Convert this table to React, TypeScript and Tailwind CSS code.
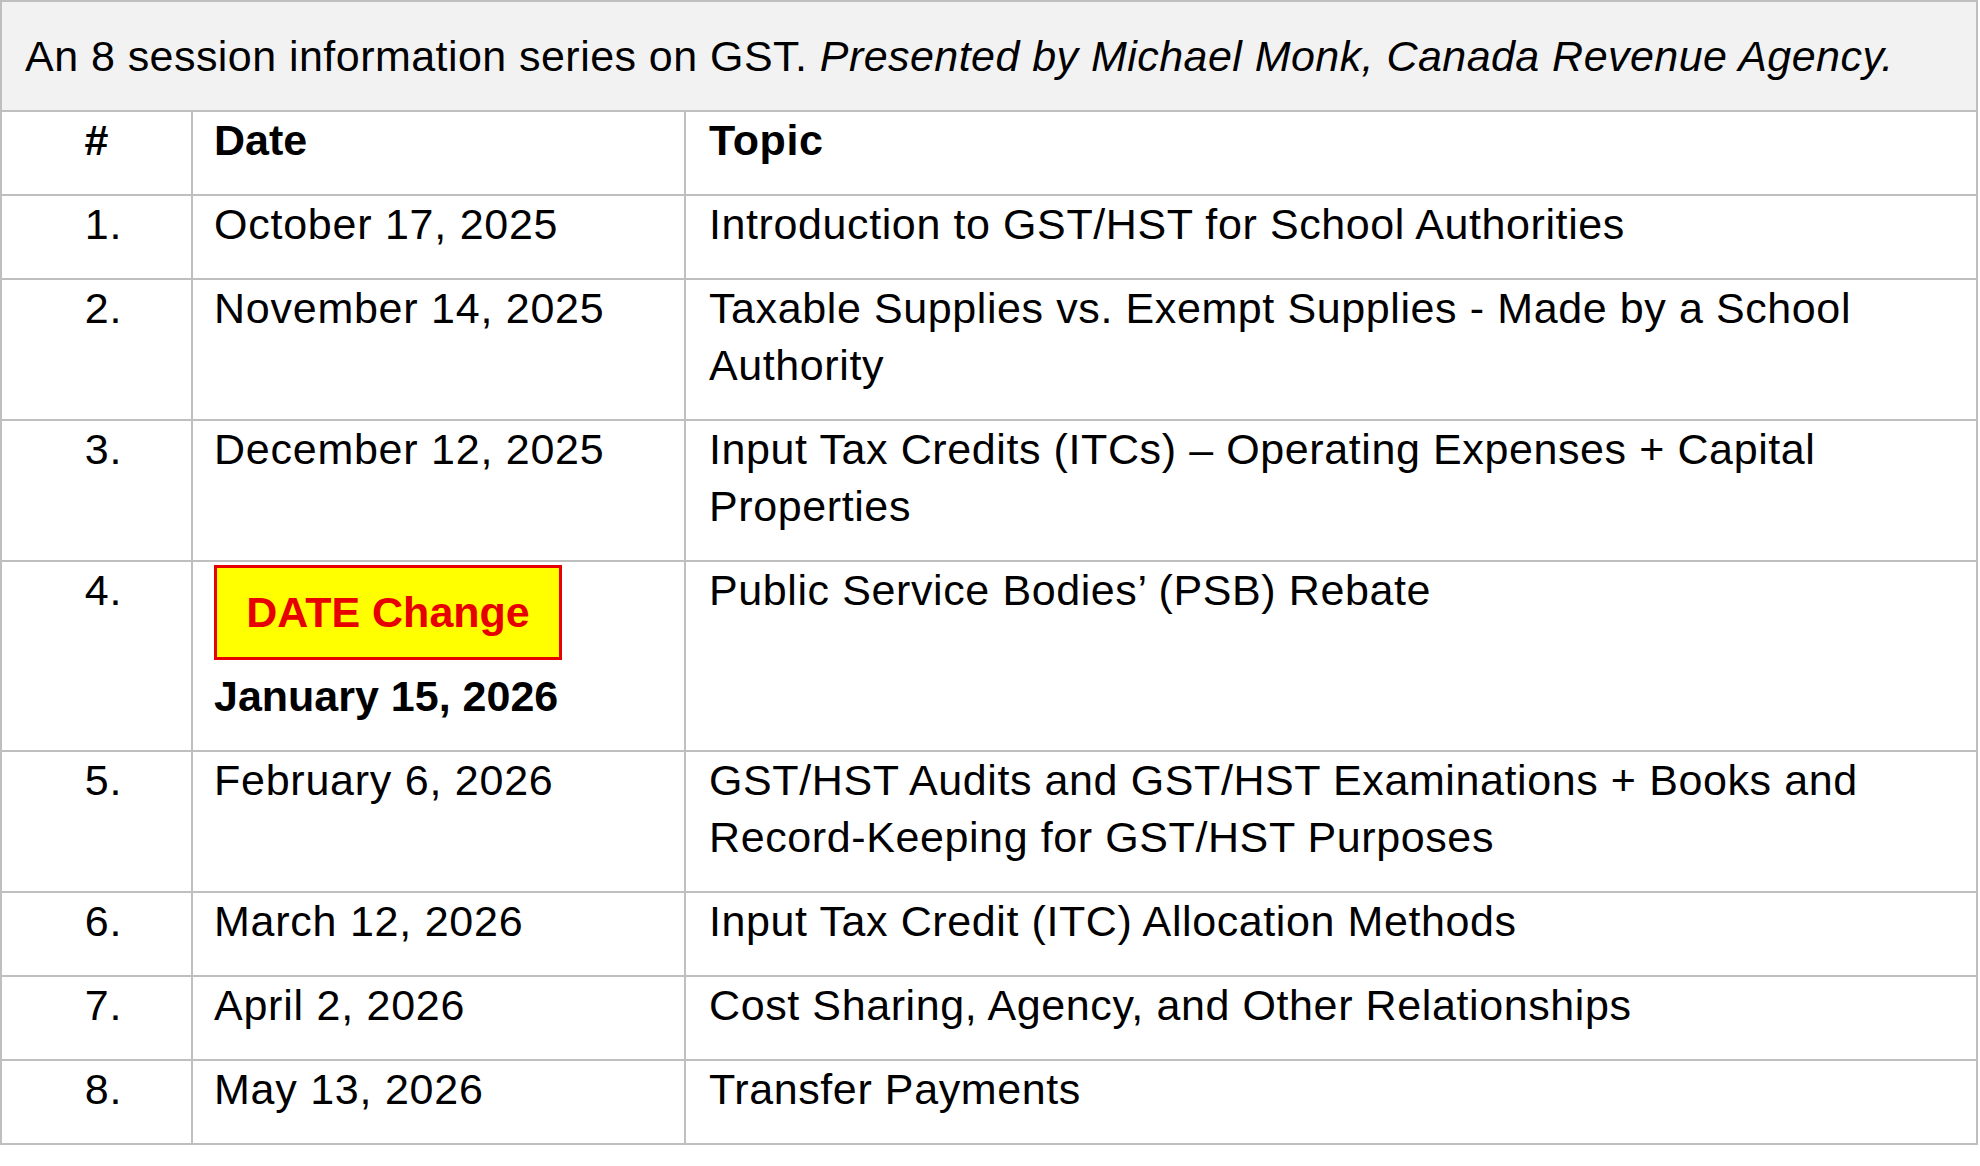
const sessions = [
  { n: "1.", date: "October 17, 2025", topic: "Introduction to GST/HST for School Authorities" },
  { n: "2.", date: "November 14, 2025", topic: "Taxable Supplies vs. Exempt Supplies - Made by a School Authority" },
  { n: "3.", date: "December 12, 2025", topic: "Input Tax Credits (ITCs) – Operating Expenses + Capital Properties" },
  { n: "4.", date: "January 15, 2026", topic: "Public Service Bodies’ (PSB) Rebate", changed: true },
  { n: "5.", date: "February 6, 2026", topic: "GST/HST Audits and GST/HST Examinations + Books and Record-Keeping for GST/HST Purposes" },
  { n: "6.", date: "March 12, 2026", topic: "Input Tax Credit (ITC) Allocation Methods" },
  { n: "7.", date: "April 2, 2026", topic: "Cost Sharing, Agency, and Other Relationships" },
  { n: "8.", date: "May 13, 2026", topic: "Transfer Payments" },
];

function Row({ n, date, topic, changed, bold }: { n: string; date: React.ReactNode; topic: string; changed?: boolean; bold?: boolean }) {
  return (
    <div className={`grid grid-cols-[191px_493px_1fr] border-t-2 border-[#bfbfbf] ${bold ? "font-bold tracking-normal" : ""}`}>
      <div className={`border-r-2 border-[#bfbfbf] pb-[25px] text-center ${bold ? "" : "pl-[14px]"}`}>{n}</div>
      <div className="border-r-2 border-[#bfbfbf] pb-[25px] pl-[21px]">
        {changed ? (
          <div className="pt-[3px]">
            <div className="flex h-[95px] w-[348px] items-center justify-center border-[3px] border-[#e60000] bg-[#ffff00] font-bold tracking-normal text-[#e60000]">
              DATE Change
            </div>
            <div className="mt-[8px] font-bold tracking-normal">{date}</div>
          </div>
        ) : (
          date
        )}
      </div>
      <div className="pb-[25px] pl-[23px] pr-4 tracking-[0.6px]">{topic}</div>
    </div>
  );
}

export default function App() {
  return (
    <div className="min-h-screen bg-white font-['Liberation_Sans',Arial,sans-serif] text-black">
      <div className="w-[1978px] border-2 border-[#bfbfbf] text-[43px] leading-[57px] tracking-[0.75px]">
        <div className="flex h-[108px] items-center bg-[#f2f2f2] pl-[23px] tracking-[0.45px]">
          <span>
            An 8 session information series on GST. <i>Presented by Michael Monk, Canada Revenue Agency.</i>
          </span>
        </div>
        <Row n="#" date="Date" topic="Topic" bold />
        {sessions.map((s) => (
          <Row key={s.n} {...s} />
        ))}
      </div>
    </div>
  );
}
